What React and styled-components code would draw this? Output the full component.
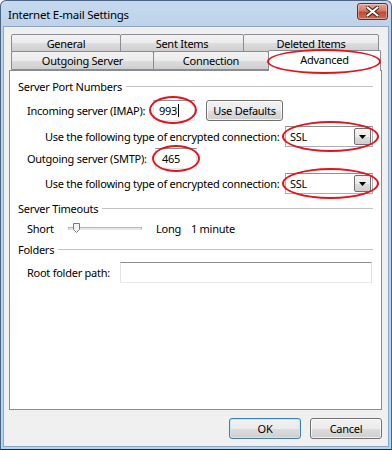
import styled, { createGlobalStyle } from 'styled-components'

const GlobalStyle = createGlobalStyle`
  html, body { margin: 0; padding: 0; background: #fff; }
  body {
    font-family: 'Noto Sans', 'DejaVu Sans', sans-serif;
    font-size: 11px;
    letter-spacing: -0.26px;
    color: #000;
  }
  * { box-sizing: border-box; }
`

const Window = styled.div`
  width: 392px;
  height: 450px;
  border: 1px solid #4d6585;
  border-bottom-color: #1c2a3a;
  border-radius: 6px 6px 0 0;
  background: linear-gradient(#c6d9ee, #b9d0e9 40px, #a7d9f4);
  padding: 0 2px 2px 2px;
  display: flex;
  flex-direction: column;
`

const TitleBar = styled.div`
  height: 25px;
  display: flex;
  align-items: center;
  padding-left: 5px;
  font-size: 11.5px;
`

const TitleText = styled.span`
  flex: 1;
  margin-top: 1px;
`

const CloseButton = styled.div`
  width: 31px;
  height: 17px;
  margin-right: 1px;
  margin-top: -4px;
  border: 1px solid #6b2a22;
  border-radius: 3px;
  background: linear-gradient(#e8a593, #d47a66 45%, #c24a34 55%, #d26a52);
  box-shadow: inset 0 0 0 1px rgba(255, 255, 255, 0.35);
  display: grid;
  place-items: center;
`

const Body = styled.div`
  flex: 1;
  background: #f0f0f0;
  border: 1px solid #8ea4bf;
  padding: 7px 6px 7px 5px;
  display: flex;
  flex-direction: column;
`

const Tabs = styled.div`
  margin-left: 2px;
  display: flex;
  flex-direction: column;
`

const TabRow = styled.div`
  display: flex;
  height: ${p => p.$h}px;
  align-items: flex-end;
`

const Tab = styled.div`
  position: relative;
  width: ${p => p.$w}px;
  height: ${p => (p.$active ? p.$h + 2 : p.$h)}px;
  margin-left: ${p => (p.$first ? 0 : -1)}px;
  margin-bottom: ${p => (p.$active ? -1 : 0)}px;
  border: 1px solid #898c95;
  border-bottom: ${p => (p.$active ? 'none' : '1px solid #898c95')};
  border-radius: 2px 2px 0 0;
  background: ${p =>
    p.$active ? '#fff' : 'linear-gradient(#f3f3f3, #ebebeb 50%, #dddddd 51%, #cfcfcf)'};
  z-index: ${p => (p.$active ? 2 : 1)};
  display: flex;
  justify-content: center;
  align-items: center;
  padding-bottom: ${p => (p.$active ? 3 : 0)}px;
`

const Panel = styled.div`
  flex: 1;
  background: #fff;
  border: 1px solid #898c95;
  padding: 8px 8px 0 8px;
  display: flex;
  flex-direction: column;
`

const Heading = styled.div`
  height: 14px;
  margin-top: ${p => p.$mt || 0}px;
  display: flex;
  align-items: center;
  gap: 4px;
  &::after {
    content: '';
    flex: 1;
    border-top: 1px solid #c3c3c3;
    margin-top: 1px;
  }
`

const Row = styled.div`
  height: ${p => p.$h || 21}px;
  margin-top: ${p => p.$mt || 0}px;
  padding-left: ${p => p.$indent}px;
  display: flex;
  align-items: center;
`

const Label = styled.span`
  width: ${p => (p.$w ? `${p.$w}px` : 'auto')};
  flex-shrink: 0;
`

const Wrap = styled.div`
  position: relative;
  margin-left: ${p => (p.$right ? 'auto' : '0')};
`

const Ellipse = styled.span`
  position: absolute;
  top: ${p => p.$t}px;
  right: ${p => p.$r}px;
  bottom: ${p => p.$b}px;
  left: ${p => p.$l}px;
  border: 2px solid #e3141b;
  border-radius: 50%;
  pointer-events: none;
  z-index: 5;
`

const TextBox = styled.div`
  width: ${p => p.$w}px;
  height: 21px;
  border: 1px solid #abadb3;
  border-top-color: #8e8f8f;
  border-left-color: #e2e3ea;
  border-right-color: #dbdfe6;
  border-bottom-color: #e3e9ef;
  background: #fff;
  padding-left: ${p => p.$pl || 4}px;
  display: flex;
  align-items: center;
`

const Caret = styled.span`
  width: 1px;
  height: 13px;
  background: #000;
  margin-left: 1px;
`

const Button = styled.div`
  width: ${p => p.$w}px;
  height: 21px;
  margin-left: ${p => p.$ml || 0}px;
  border: 1px solid ${p => (p.$default ? '#3c7fb1' : '#707070')};
  border-radius: 3px;
  background: linear-gradient(#f2f2f2, #ebebeb 50%, #dddddd 51%, #cfcfcf);
  box-shadow: inset 0 0 0 1px ${p => (p.$default ? '#c5e7f7' : 'rgba(255,255,255,0.7)')};
  display: flex;
  justify-content: center;
  align-items: center;
`

const Select = styled.div`
  width: 88px;
  height: 21px;
  border: 1px solid #abadb3;
  border-top-color: #8e8f8f;
  background: #fff;
  padding: 1px 1px 1px 4px;
  display: flex;
  align-items: center;
`

const SelectValue = styled.span`
  flex: 1;
`

const Arrow = styled.div`
  width: 17px;
  height: 17px;
  border: 1px solid #707070;
  border-radius: 2px;
  background: linear-gradient(#f2f2f2, #ebebeb 50%, #dddddd 51%, #cfcfcf);
  display: grid;
  place-items: center;
`

const Slider = styled.div`
  position: relative;
  width: 74px;
  height: 20px;
  margin: 0 14px 0 14px;
  display: flex;
  align-items: center;
`

const Track = styled.div`
  width: 100%;
  height: 3px;
  border: 1px solid #b5b5b5;
  border-bottom-color: #e7e7e7;
  background: #e7eaea;
`

const Thumb = styled.svg`
  position: absolute;
  left: 5px;
  top: 5px;
`

const Gap = styled.span`
  width: ${p => p.$w}px;
`

const Footer = styled.div`
  height: 21px;
  margin-top: 8px;
  display: flex;
  justify-content: flex-end;
`

function Combo() {
  return (
    <Select>
      <SelectValue>SSL</SelectValue>
      <Arrow>
        <svg width="7" height="4" viewBox="0 0 7 4">
          <path d="M0 0h7L3.5 4z" fill="#000" />
        </svg>
      </Arrow>
    </Select>
  )
}

export default function App() {
  return (
    <>
      <GlobalStyle />
      <Window>
        <TitleBar>
          <TitleText>Internet E-mail Settings</TitleText>
          <CloseButton>
            <svg width="13" height="11" viewBox="0 0 13 11">
              <path
                d="M1.5 1.5l10 8M11.5 1.5l-10 8"
                stroke="#3d1a14"
                strokeWidth="4"
                strokeLinecap="round"
              />
              <path
                d="M1.5 1.5l10 8M11.5 1.5l-10 8"
                stroke="#fff"
                strokeWidth="2.2"
                strokeLinecap="round"
              />
            </svg>
          </CloseButton>
        </TitleBar>
        <Body>
          <Tabs>
            <TabRow $h={18}>
              <Tab $w={110} $h={18} $first>General</Tab>
              <Tab $w={124} $h={18}>Sent Items</Tab>
              <Tab $w={136} $h={18}>Deleted Items</Tab>
            </TabRow>
            <TabRow $h={18}>
              <Tab $w={143} $h={19} $first>Outgoing Server</Tab>
              <Tab $w={116} $h={19}>Connection</Tab>
              <Tab $w={113} $h={19} $active>
                Advanced
                <Ellipse $t={-2} $r={-1} $b={-3} $l={-2} />
              </Tab>
            </TabRow>
          </Tabs>
          <Panel>
            <Heading>Server Port Numbers</Heading>
            <Row $indent={9} $mt={7}>
              <Label $w={126}>Incoming server (IMAP):</Label>
              <Wrap>
                <TextBox $w={42} $pl={5}>993<Caret /></TextBox>
                <Ellipse $t={-4} $r={-2} $b={-3} $l={-4} />
              </Wrap>
              <Button $w={77} $ml={11}>Use Defaults</Button>
            </Row>
            <Row $indent={27} $mt={5}>
              <Label>Use the following type of encrypted connection:</Label>
              <Wrap $right>
                <Combo />
                <Ellipse $t={-5} $r={-6} $b={-5} $l={-3} />
              </Wrap>
            </Row>
            <Row $indent={9} $mt={1}>
              <Label $w={128}>Outgoing server (SMTP):</Label>
              <Wrap>
                <TextBox $w={42} $pl={6}>465</TextBox>
                <Ellipse $t={-3} $r={-3} $b={-3} $l={-3} />
              </Wrap>
            </Row>
            <Row $indent={27} $mt={4}>
              <Label>Use the following type of encrypted connection:</Label>
              <Wrap $right>
                <Combo />
                <Ellipse $t={-5} $r={-6} $b={-5} $l={-3} />
              </Wrap>
            </Row>
            <Heading $mt={7}>Server Timeouts</Heading>
            <Row $indent={9} $mt={3} $h={20}>
              <Label $w={27}>Short</Label>
              <Slider>
                <Track />
                <Thumb width="7" height="10" viewBox="0 0 7 10">
                  <path d="M0.5 0.5h6v6l-3 3l-3-3z" fill="#f4f4f4" stroke="#7a7a7a" />
                </Thumb>
              </Slider>
              <span>Long</span>
              <Gap $w={10} />
              <span>1 minute</span>
            </Row>
            <Heading $mt={4}>Folders</Heading>
            <Row $indent={9} $mt={6}>
              <Label $w={93}>Root folder path:</Label>
              <TextBox $w={252} />
            </Row>
          </Panel>
          <Footer>
            <Button $w={72} $default>OK</Button>
            <Button $w={72} $ml={9}>Cancel</Button>
          </Footer>
        </Body>
      </Window>
    </>
  )
}
